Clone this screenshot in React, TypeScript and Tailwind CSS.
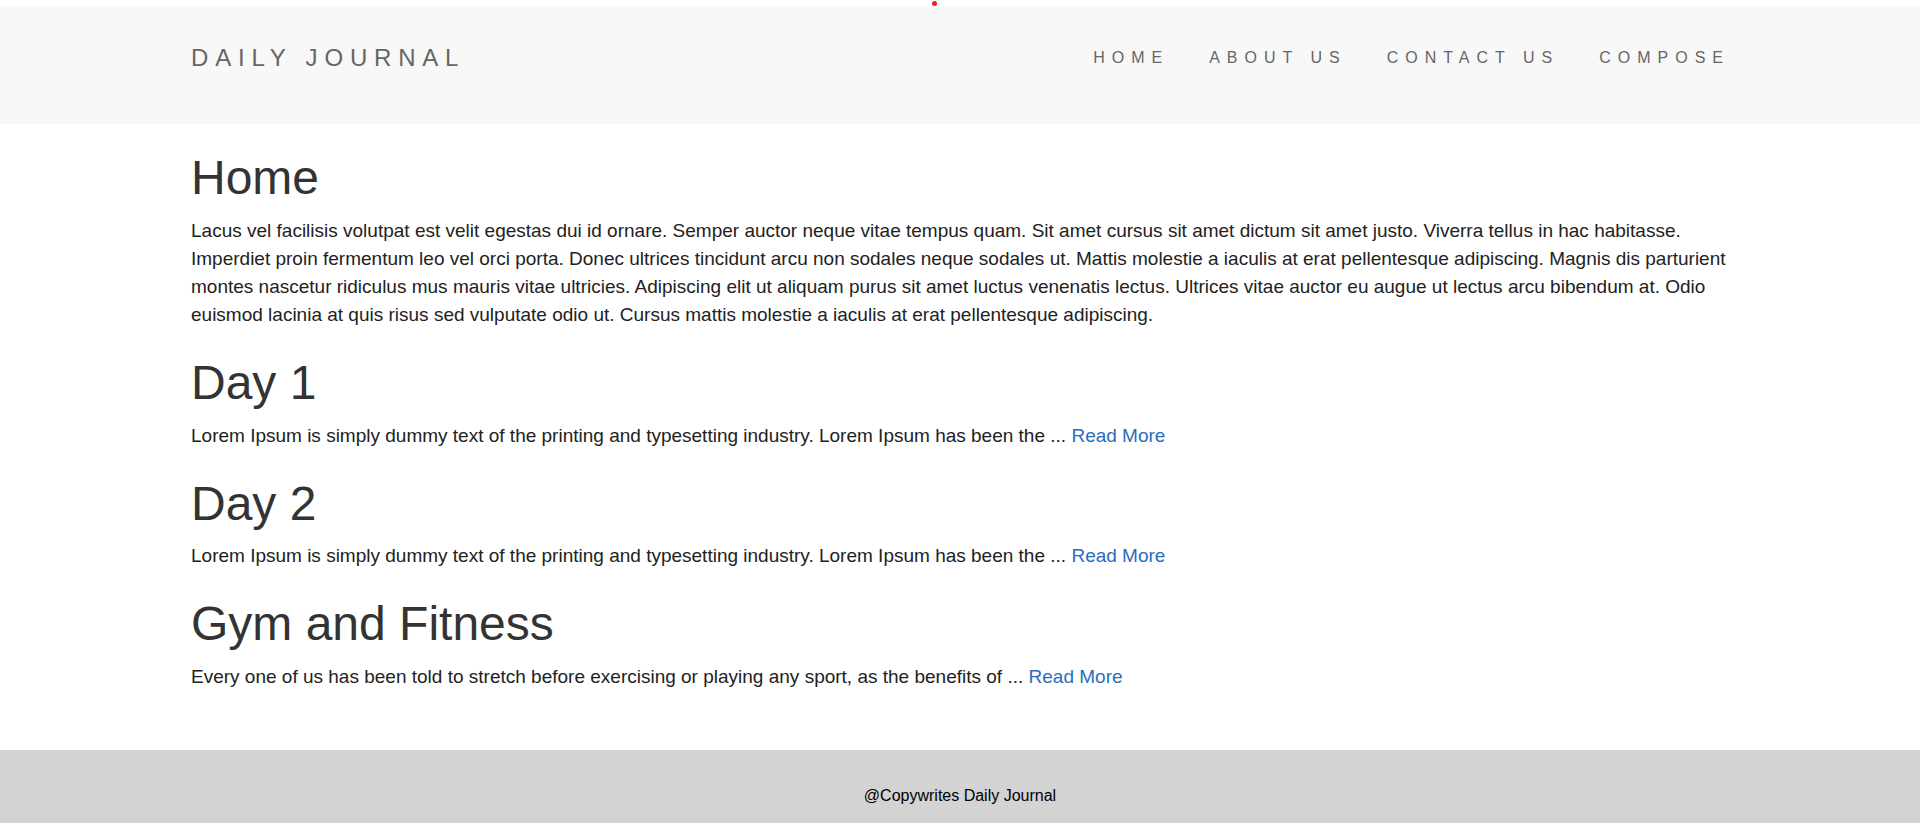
import React from "react";

const posts = [
  {
    title: "Day 1",
    body: "Lorem Ipsum is simply dummy text of the printing and typesetting industry. Lorem Ipsum has been the ...",
  },
  {
    title: "Day 2",
    body: "Lorem Ipsum is simply dummy text of the printing and typesetting industry. Lorem Ipsum has been the ...",
  },
  {
    title: "Gym and Fitness",
    body: "Every one of us has been told to stretch before exercising or playing any sport, as the benefits of ...",
  },
];

export default function App() {
  return (
    <div className="relative min-h-screen bg-white font-['Liberation_Sans',Arial,Helvetica,sans-serif] text-[#333]">
      <span className="absolute left-[932px] top-[1px] h-[5px] w-[5px] rounded-full bg-[#e8202a]" />
      <div className="h-[6px]" />
      <header className="flex h-[118px] items-start justify-between bg-[#f8f8f8] pl-[191px] pr-[190px]">
        <a className="mt-[40px] text-[24px] leading-[24px] tracking-[6.8px] text-[#666]">DAILY JOURNAL</a>
        <nav className="mt-[44px] flex gap-[40px] text-[16px] leading-[16px] tracking-[7px] text-[#666]">
          <a>HOME</a>
          <a>ABOUT US</a>
          <a>CONTACT US</a>
          <a>COMPOSE</a>
        </nav>
      </header>
      <main className="flex flex-col gap-[28px] pl-[191px] pr-[190px] pt-[28px] pb-[59px]">
        <section>
          <h1 className="mb-[12px] text-[48px] leading-[1.1] text-[#333]">Home</h1>
          <p className="text-[19px] leading-[28px] text-[#222]">
            Lacus vel facilisis volutpat est velit egestas dui id ornare. Semper auctor neque vitae tempus quam. Sit amet cursus sit amet dictum sit amet justo. Viverra tellus in hac habitasse. Imperdiet proin fermentum leo vel orci porta. Donec ultrices tincidunt arcu non sodales neque sodales ut. Mattis molestie a iaculis at erat pellentesque adipiscing. Magnis dis parturient montes nascetur ridiculus mus mauris vitae ultricies. Adipiscing elit ut aliquam purus sit amet luctus venenatis lectus. Ultrices vitae auctor eu augue ut lectus arcu bibendum at. Odio euismod lacinia at quis risus sed vulputate odio ut. Cursus mattis molestie a iaculis at erat pellentesque adipiscing.
          </p>
        </section>
        {posts.map((p) => (
          <section key={p.title}>
            <h1 className="mb-[12px] text-[48px] leading-[1.1] text-[#333]">{p.title}</h1>
            <p className="text-[19px] leading-[28px] text-[#222]">
              {p.body} <a className="text-[#2a6ebb]">Read More</a>
            </p>
          </section>
        ))}
      </main>
      <footer className="bg-[#d3d3d3] pt-[34px] pb-[40px] text-center text-[16px] leading-[24px] text-black">
        @Copywrites Daily Journal
      </footer>
    </div>
  );
}
